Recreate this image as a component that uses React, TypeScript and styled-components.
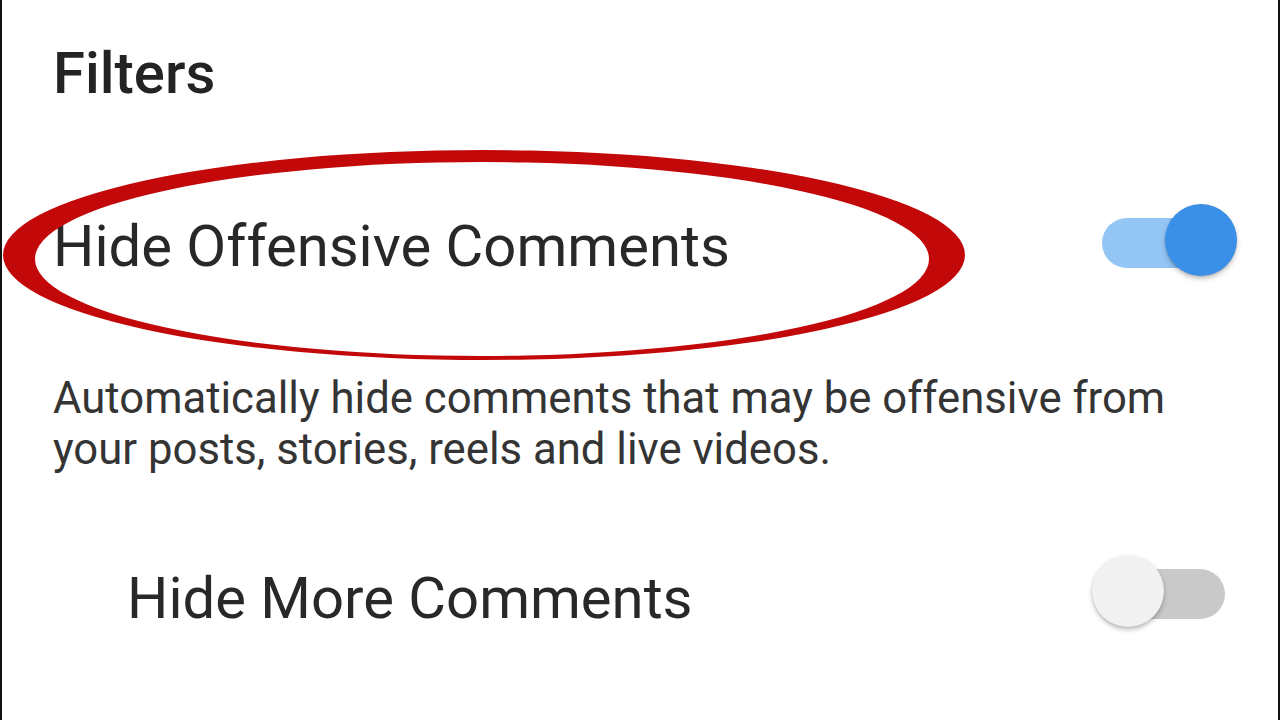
import React from "react";
import styled, { createGlobalStyle } from "styled-components";

const GlobalStyle = createGlobalStyle`
  html, body { margin: 0; padding: 0; background: #ffffff; }
  body { font-family: Roboto, "Noto Sans", "Liberation Sans", sans-serif; }
`;

const Page = styled.div`
  position: relative;
  box-sizing: border-box;
  width: 1280px;
  height: 720px;
  overflow: hidden;
  background: #ffffff;
  border-left: 2px solid #111;
  border-right: 2px solid #111;
  padding: 38px 0 0 51px;
  display: flex;
  flex-direction: column;
`;

const Title = styled.h2`
  margin: 0;
  font-size: 58px;
  line-height: 70px;
  font-weight: 500;
  color: #232323;
`;

const Row = styled.div<{ $top: number }>`
  margin-top: ${(p) => p.$top}px;
  height: 90px;
  display: flex;
  align-items: center;
  justify-content: space-between;
  padding-right: 53px;
`;

const Label = styled.span<{ $indent?: number }>`
  padding-left: ${(p) => p.$indent ?? 0}px;
  font-size: 58px;
  line-height: 70px;
  font-weight: 400;
  color: #282828;
`;

const Description = styled.p`
  margin: 82px 0 0 0;
  font-size: 43.7px;
  line-height: 51px;
  color: #343434;
  width: 1160px;
`;

const SwitchTrack = styled.div<{ $on: boolean }>`
  position: relative;
  width: 123px;
  height: 50px;
  margin-bottom: ${(p) => (p.$on ? 6 : 8)}px;
  border-radius: 25px;
  background: ${(p) => (p.$on ? "#93c5f5" : "#c9c9c9")};
`;

const SwitchThumb = styled.div<{ $on: boolean }>`
  position: absolute;
  top: 50%;
  ${(p) => (p.$on ? "right: -12px;" : "left: -10px;")}
  width: 72px;
  height: 72px;
  margin-top: -39px;
  border-radius: 50%;
  background: ${(p) => (p.$on ? "#3a8fe7" : "#f1f1f1")};
  box-shadow: 0 3px 5px rgba(0, 0, 0, 0.22), 0 1px 2px rgba(0, 0, 0, 0.12);
`;

const Ring = styled.svg`
  position: absolute;
  left: 0;
  top: 140px;
  pointer-events: none;
`;

function Switch({ on }: { on: boolean }) {
  return (
    <SwitchTrack $on={on}>
      <SwitchThumb $on={on} />
    </SwitchTrack>
  );
}

export default function App() {
  const cx1 = 482, cy = 115, rx1 = 481, ry1 = 105;
  const cx2 = 480, rx2 = 447, ry2 = 97;
  const d =
    `M ${cx1 - rx1} ${cy} a ${rx1} ${ry1} 0 1 0 ${2 * rx1} 0 a ${rx1} ${ry1} 0 1 0 ${-2 * rx1} 0 Z ` +
    `M ${cx2 - rx2} ${cy + 4} a ${rx2} ${ry2} 0 1 0 ${2 * rx2} 0 a ${rx2} ${ry2} 0 1 0 ${-2 * rx2} 0 Z`;
  return (
    <>
      <GlobalStyle />
      <Page>
        <Title>Filters</Title>
        <Row $top={93}>
          <Label>Hide Offensive Comments</Label>
          <Switch on={true} />
        </Row>
        <Description>
          Automatically hide comments that may be offensive from your posts, stories, reels and live videos.
        </Description>
        <Row $top={78}>
          <Label $indent={74}>Hide More Comments</Label>
          <Switch on={false} />
        </Row>
        <Ring width="980" height="235" viewBox="0 0 980 235">
          <path d={d} fill="#c20808" fillRule="evenodd" />
        </Ring>
      </Page>
    </>
  );
}
